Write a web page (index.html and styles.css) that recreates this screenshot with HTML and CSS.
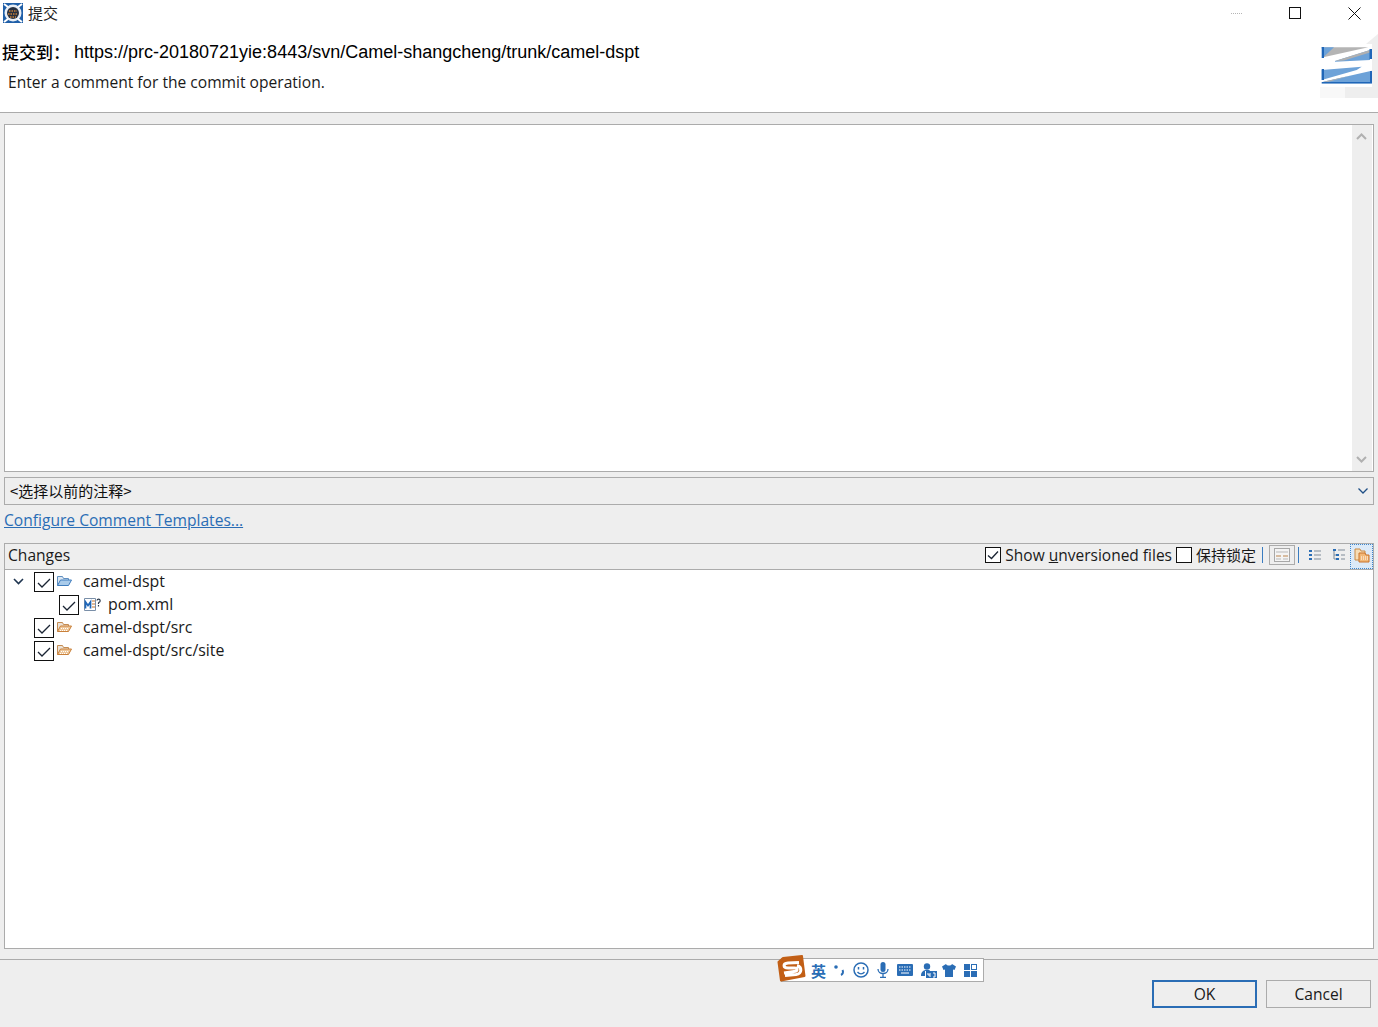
FILE: index.html
```html
<!DOCTYPE html>
<html lang="zh">
<head>
<meta charset="utf-8">
<title>提交</title>
<link rel="stylesheet" href="styles.css">
</head>
<body>
<div class="dialog">
  <header class="header">
    <div class="titlebar">
      <div class="title">
        <svg class="app-icon" width="20" height="20" viewBox="0 0 20 20">
          <rect width="20" height="20" fill="#1f5fa8"/>
          <circle cx="10" cy="10" r="8.500" fill="#e8eef5"/>
          <path d="M1 1l4 3M19 1l-4 3M1 19l4-3M19 19l-4-3" stroke="#fff" stroke-width="2"/>
          <circle cx="10" cy="10" r="6" fill="#27303f"/>
          <path d="M6 8h8M5 11h10M7 14h6" stroke="#c9803a" stroke-width="1.400" stroke-dasharray="1.500 1"/>
        </svg>
        <span>提交</span>
      </div>
      <div class="winctrls">
        <span class="win-min"></span>
        <svg class="win-max" width="12" height="12" viewBox="0 0 12 12"><rect x=".5" y=".5" width="11" height="11" fill="none" stroke="#111"/></svg>
        <svg class="win-close" width="13" height="13" viewBox="0 0 13 13"><path d="M.5.500l12 12M12.500.500l-12 12" stroke="#111" fill="none"/></svg>
      </div>
    </div>
    <div class="heading">
      <div class="heading-text">
        <div class="target"><span class="target-label">提交到：</span><span class="target-url">https://prc-20180721yie:8443/svn/Camel-shangcheng/trunk/camel-dspt</span></div>
        <div class="subtitle">Enter a comment for the commit operation.</div>
      </div>
      <svg class="banner" width="58" height="64" viewBox="0 0 58 64">
        <path d="M58 0L46 10H52V53H25V64H58Z" fill="#eeeeee"/>
        <path d="M0 53H25V64H0Z" fill="#f8f8f8"/>
        <path d="M1.700 13.300H48.300L3.300 23.300Z" fill="#b4b4b4"/>
        <path d="M1.700 13.300H14L3.300 23.300Z" fill="#6da2d8"/>
        <path d="M15 27L50 16V26L15 27.700Z" fill="#6da2d8"/>
        <path d="M15 27L50 16V18.500L24 26.500Z" fill="#b0b0b0"/>
        <path d="M1.700 36L41.700 32.700L36.700 36L1.700 46Z" fill="#6da2d8"/>
        <path d="M3.300 47.700L51.700 36.700V49.300H1.700Z" fill="#6da2d8"/>
        <path d="M3.300 47.700L30 41.700L8 48Z" fill="#b0b0b0"/>
        <path d="M1.700 13H4V24H1.700ZM49.500 15H52V25H49.500ZM1.700 35H4V46H1.700ZM50 37H52V49.500H50ZM1.700 48H52V49.500H1.700Z" fill="#1f66b8"/>
      </svg>
    </div>
  </header>

  <main class="content">
    <div class="comment">
      <div class="comment-input"></div>
      <div class="scrollbar">
        <svg width="11" height="7" viewBox="0 0 11 7"><path d="M1 6l4.500-4.500L10 6" fill="none" stroke="#b0b0b0" stroke-width="2"/></svg>
        <svg width="11" height="7" viewBox="0 0 11 7"><path d="M1 1l4.500 4.500L10 1" fill="none" stroke="#b0b0b0" stroke-width="2"/></svg>
      </div>
    </div>

    <div class="combo">
      <span class="combo-text">&lt;选择以前的注释&gt;</span>
      <svg width="10" height="6" viewBox="0 0 10 6"><path d="M.5.500L5 5L9.500.500" fill="none" stroke="#1f4f86" stroke-width="1.300"/></svg>
    </div>

    <a class="link" href="#">Configure Comment Templates...</a>

    <section class="changes">
      <div class="changes-bar">
        <span class="changes-title">Changes</span>
        <div class="tools">
          <label class="opt">
            <span class="box box-sm"><svg width="14" height="14" viewBox="0 0 14 14"><path d="M2 7.500l3.500 3L12 3.500" fill="none" stroke="#1a2433" stroke-width="1.300"/></svg></span>
            <span class="opt-text">Show <u>u</u>nversioned files</span>
          </label>
          <label class="opt">
            <span class="box box-sm"></span>
            <span class="cjk">保持锁定</span>
          </label>
          <span class="sep"></span>
          <span class="layout-btn">
            <svg width="16" height="14" viewBox="0 0 16 14"><rect x=".5" y=".5" width="15" height="13" fill="#f4f4f4" stroke="#a8a8a8"/><path d="M2 4h12M2 8h5M9 8h5M2 11h5M9 11h5" stroke="#b9b9b9"/><path d="M2 8h5M9 8h5" stroke="#d9a26b"/></svg>
          </span>
          <span class="sep"></span>
          <svg class="tool-flat" width="12" height="12" viewBox="0 0 12 12"><path d="M0 1h3v2H0ZM0 5h3v2H0ZM0 9h3v2H0Z" fill="#2a6db5"/><path d="M5 2h7M5 6h7M5 10h7" stroke="#7f8b99"/></svg>
          <svg class="tool-tree" width="12" height="12" viewBox="0 0 12 12"><path d="M0 0h3v2H0ZM3 5h3v2H3ZM3 9h3v2H3Z" fill="#2a6db5"/><path d="M1 2v8h2M1 6h2M5 1h7M8 6h4M8 10h4" stroke="#7f8b99" fill="none"/></svg>
          <span class="compress">
            <svg width="16" height="16" viewBox="0 0 16 16"><path d="M1 2h5l1 2h4v9H1Z" fill="#f6dcb4" stroke="#c98a45"/><path d="M5 6h6l1 2h3v7H5Z" fill="#f2b877" stroke="#c9722a"/><path d="M7 10h7M7 12h7" stroke="#fff" stroke-dasharray="1 1"/></svg>
          </span>
        </div>
      </div>
      <ul class="tree">
        <li class="row">
          <svg class="twist" width="11" height="7" viewBox="0 0 11 7"><path d="M1 1l4.500 4.500L10 1" fill="none" stroke="#1f3550" stroke-width="1.600"/></svg>
          <span class="box"><svg width="18" height="18" viewBox="0 0 18 18"><path d="M3 10l4 4 8-8" fill="none" stroke="#1a2433" stroke-width="1.300"/></svg></span>
          <svg class="folder" width="15" height="12" viewBox="0 0 15 12"><path d="M.5 10.500V1.500h5l1 2h5v2" fill="#dbe7f3" stroke="#5f8fc0"/><path d="M.5 10.500l3-5.500h11l-3 5.500Z" fill="#a9cbea" stroke="#3f7cbc"/></svg>
          <span class="name">camel-dspt</span>
        </li>
        <li class="row row-child">
          <span class="box"><svg width="18" height="18" viewBox="0 0 18 18"><path d="M3 10l4 4 8-8" fill="none" stroke="#1a2433" stroke-width="1.300"/></svg></span>
          <svg class="file" width="17" height="13" viewBox="0 0 17 13"><path d="M.5.500h11v12h-11Z" fill="#fff" stroke="#7a8fa8"/><path d="M1.500 10.500V4l2.500 3.500L6.500 4v6.500" fill="none" stroke="#1f66b8" stroke-width="1.700"/><path d="M8 3h3M8 6h3M8 9h3" stroke="#c4722c"/><path d="M13 2.500a1.600 1.600 0 1 1 2 1.800l-.5.7v1M14.500 7v1.500" fill="none" stroke="#2b3a4d" stroke-width="1.200"/></svg>
          <span class="name">pom.xml</span>
        </li>
        <li class="row">
          <span class="twist-gap"></span>
          <span class="box"><svg width="18" height="18" viewBox="0 0 18 18"><path d="M3 10l4 4 8-8" fill="none" stroke="#1a2433" stroke-width="1.300"/></svg></span>
          <svg class="folder" width="15" height="12" viewBox="0 0 15 12"><path d="M.5 10.500V1.500h5l1 2h5v2" fill="#ece3d8" stroke="#c58c52"/><path d="M.5 10.500l3-5.500h11l-3 5.500Z" fill="#eec79a" stroke="#c9803a"/><path d="M4 7.500h8M3 9.500h7" stroke="#fff" stroke-dasharray="1 1"/></svg>
          <span class="name">camel-dspt/src</span>
        </li>
        <li class="row">
          <span class="twist-gap"></span>
          <span class="box"><svg width="18" height="18" viewBox="0 0 18 18"><path d="M3 10l4 4 8-8" fill="none" stroke="#1a2433" stroke-width="1.300"/></svg></span>
          <svg class="folder" width="15" height="12" viewBox="0 0 15 12"><path d="M.5 10.500V1.500h5l1 2h5v2" fill="#ece3d8" stroke="#c58c52"/><path d="M.5 10.500l3-5.500h11l-3 5.500Z" fill="#eec79a" stroke="#c9803a"/><path d="M4 7.500h8M3 9.500h7" stroke="#fff" stroke-dasharray="1 1"/></svg>
          <span class="name">camel-dspt/src/site</span>
        </li>
      </ul>
    </section>
  </main>

  <footer class="footer">
    <button class="btn btn-default" type="button">OK</button>
    <button class="btn" type="button">Cancel</button>
  </footer>

  <div class="ime">
    <svg class="ime-logo" width="29" height="27" viewBox="0 0 29 27">
      <path d="M6 3L25 1L27.500 21L4 25.500L1.500 7Z" fill="#c25f16" stroke="#c25f16" stroke-width="2" stroke-linejoin="round"/>
      <path d="M22 7.500L11 8C5.500 8.500 6 13 11 13H17.500C21 13 21 16.500 17 16.500L7 18M8 20.500L19 19.500C25.500 18.500 25 12 20 10.500" fill="none" stroke="#fff" stroke-width="3"/>
    </svg>
    <span class="ime-en">英</span>
    <svg width="11" height="14" viewBox="0 0 11 14"><circle cx="2" cy="4" r="1.800" fill="#2a6db5"/><path d="M8.500 7c1 2 .5 4-1.500 5" fill="none" stroke="#2a6db5" stroke-width="2"/></svg>
    <svg width="16" height="16" viewBox="0 0 16 16"><circle cx="8" cy="8" r="7" fill="none" stroke="#2a6db5" stroke-width="1.500"/><path d="M5.500 5v2.500M10.500 5v2.500" stroke="#2a6db5" stroke-width="1.500"/><path d="M4.500 10c2 2.500 5 2.500 7 0" fill="none" stroke="#2a6db5" stroke-width="1.300"/></svg>
    <svg width="12" height="16" viewBox="0 0 12 16"><rect x="3.500" y="0" width="5" height="10" rx="2.500" fill="#2a6db5"/><path d="M1 7c0 6 10 6 10 0M6 12v3M3 15.500h6" fill="none" stroke="#2a6db5" stroke-width="1.300"/></svg>
    <svg width="16" height="12" viewBox="0 0 16 12"><rect width="16" height="12" rx="1" fill="#2a6db5"/><path d="M2 3h12M2 6h12" stroke="#fff" stroke-dasharray="1.500 1"/><path d="M4 9h8" stroke="#fff"/></svg>
    <svg width="16" height="15" viewBox="0 0 16 15"><circle cx="6" cy="3.500" r="3.200" fill="#2a6db5"/><path d="M0 13c0-5 3-6 6-6s3 .5 3 1H4v5Z" fill="#2a6db5"/><rect x="5" y="8" width="11" height="7" fill="#2a6db5"/><path d="M7 10v2h2M9 10v4M12 10h2v4h-2" fill="none" stroke="#fff"/></svg>
    <svg class="ime-shirt" width="14" height="13" viewBox="0 0 14 13"><path d="M4 0L0 2.500L1.500 6L3 5.500V13H11V5.500L12.500 6L14 2.500L10 0C9 2 5 2 4 0Z" fill="#2a6db5"/></svg>
    <svg width="13" height="13" viewBox="0 0 13 13"><path d="M0 0h6v6H0ZM0 7h6v6H0ZM7 7h6v6H7Z" fill="#2a6db5"/><rect x="7.500" y=".5" width="5" height="5" fill="none" stroke="#2a6db5"/></svg>
  </div>
</div>
</body>
</html>
```

FILE: styles.css
```css
* {
  box-sizing: border-box;
}

html,
body {
  margin: 0;
  padding: 0;
}

body {
  background: #eeeeee;
  color: #1a1a1a;
  font-family: "Open Sans", "Noto Sans CJK SC", sans-serif;
  font-size: 15.600px;
}

.dialog {
  position: relative;
  display: flex;
  flex-direction: column;
  width: 1378px;
  height: 1027px;
  overflow: hidden;
}

/* header */
.header {
  height: 113px;
  flex: none;
  background: #ffffff;
  border-bottom: 1px solid #ababab;
}

.titlebar {
  display: flex;
  align-items: center;
  justify-content: space-between;
  height: 26px;
}

.title {
  display: flex;
  align-items: center;
  gap: 5px;
  padding-left: 3px;
  font-family: "Noto Sans CJK SC", sans-serif;
  font-size: 15px;
  line-height: 20px;
  color: #222222;
}

.winctrls {
  display: flex;
  align-items: center;
  height: 26px;
}

.win-min {
  width: 11px;
  height: 0;
  margin-right: 47px;
  border-top: 1px dotted #b5b5b5;
}

.win-max {
  margin-right: 47px;
}

.win-close {
  margin-right: 17px;
}

.heading {
  display: flex;
  justify-content: space-between;
  height: 86px;
}

.heading-text {
  padding-top: 14px;
}

.target {
  display: flex;
  align-items: center;
  height: 24px;
  padding-left: 2px;
  color: #000000;
}

.target-label {
  width: 72px;
  padding-bottom: 2px;
  font-family: "Noto Sans CJK SC", sans-serif;
  font-size: 17px;
  font-weight: 500;
}

.target-url {
  font-family: "Liberation Sans", sans-serif;
  font-size: 18px;
}

.subtitle {
  padding: 8px 0 0 8px;
  line-height: 20px;
}

.banner {
  flex: none;
  margin-top: 8px;
}

/* main content */
.content {
  display: flex;
  flex: 1;
  flex-direction: column;
  padding: 11px 4px 10px;
}

.comment {
  display: flex;
  flex: none;
  height: 348px;
  background: #ffffff;
  border: 1px solid #ababab;
}

.comment-input {
  flex: 1;
}

.scrollbar {
  display: flex;
  flex-direction: column;
  align-items: center;
  justify-content: space-between;
  width: 20px;
  margin-right: 1px;
  padding: 8px 1px 8px 0;
  background: #eeeeee;
}

.combo {
  display: flex;
  flex: none;
  align-items: center;
  justify-content: space-between;
  height: 28px;
  margin-top: 5px;
  padding: 0 5px 0 5px;
  border: 1px solid #ababab;
  color: #111111;
  font-family: "Noto Sans CJK SC", sans-serif;
  font-size: 15px;
}

.combo-text {
  padding-bottom: 2px;
}

.link {
  flex: none;
  height: 20px;
  margin-top: 6px;
  color: #2a6db5;
  line-height: 19px;
  text-decoration: underline;
}

.changes {
  display: flex;
  flex: 1;
  flex-direction: column;
  margin-top: 12px;
  background: #ffffff;
  border: 1px solid #ababab;
}

.changes-bar {
  display: flex;
  flex: none;
  align-items: flex-start;
  justify-content: space-between;
  height: 26px;
  padding-left: 3px;
  background: #eeeeee;
  border-bottom: 1px solid #ababab;
}

.changes-title {
  line-height: 23px;
}

.tools {
  display: flex;
  align-items: center;
  height: 25px;
  padding-bottom: 3px;
}

.opt {
  display: flex;
  align-items: center;
  gap: 4px;
  margin-right: 4px;
}

.opt-text {
  font-size: 15.500px;
}

.cjk {
  padding-bottom: 2px;
  font-family: "Noto Sans CJK SC", sans-serif;
  font-size: 15px;
}

.box {
  display: flex;
  flex: none;
  align-items: center;
  justify-content: center;
  width: 20px;
  height: 20px;
  background: #ffffff;
  border: 1px solid #111111;
}

.box-sm {
  width: 16px;
  height: 16px;
}

.sep {
  width: 1px;
  height: 16px;
  margin-left: 2px;
  background: #3a7cc0;
}

.layout-btn {
  display: flex;
  align-items: center;
  justify-content: center;
  width: 26px;
  height: 20px;
  margin: 0 1px 0 6px;
  border: 1px solid #ababab;
}

.tool-flat {
  margin-left: 10px;
}

.tool-tree {
  margin-left: 12px;
}

.compress {
  display: flex;
  align-self: flex-start;
  align-items: flex-start;
  justify-content: center;
  width: 23px;
  height: 25px;
  margin-left: 5px;
  padding-top: 3px;
  background: #dceaf8;
  outline: 1px dotted #3f86cc;
  outline-offset: -1px;
}

.tree {
  margin: 0;
  padding: 0;
  list-style: none;
}

.row {
  display: flex;
  align-items: center;
  height: 23px;
  padding-left: 8px;
}

.row-child {
  padding-left: 54px;
}

.twist {
  flex: none;
  width: 11px;
  margin-right: 10px;
}

.twist-gap {
  flex: none;
  width: 11px;
  margin-right: 10px;
}

.folder {
  flex: none;
  margin: -1px 0 0 3px;
}

.file {
  flex: none;
  margin-left: 5px;
}

.name {
  margin-left: 11px;
  padding-bottom: 1px;
  font-size: 15.900px;
}

.row-child .name {
  margin-left: 7px;
}

/* footer */
.footer {
  display: flex;
  flex: none;
  justify-content: flex-end;
  gap: 9px;
  height: 68px;
  padding: 20px 7px 0 0;
  border-top: 1px solid #ababab;
}

.btn {
  width: 105px;
  height: 28px;
  padding: 0;
  background: #eeeeee;
  border: 1px solid #ababab;
  color: #1a1a1a;
  font-family: "Open Sans", sans-serif;
  font-size: 15.600px;
}

.btn-default {
  border: 2px solid #2a6db5;
}

/* floating input method bar */
.ime {
  position: absolute;
  left: 781px;
  top: 958px;
  display: flex;
  align-items: center;
  gap: 8px;
  width: 203px;
  height: 24px;
  padding-left: 29px;
  background: #ffffff;
  border: 1px solid #ababab;
}

.ime-logo {
  position: absolute;
  left: -5px;
  top: -4px;
}

.ime-shirt {
  margin-left: -3px;
}

.ime-en {
  color: #2a6db5;
  font-family: "Noto Sans CJK SC", sans-serif;
  font-size: 15px;
  font-weight: 700;
}
```
